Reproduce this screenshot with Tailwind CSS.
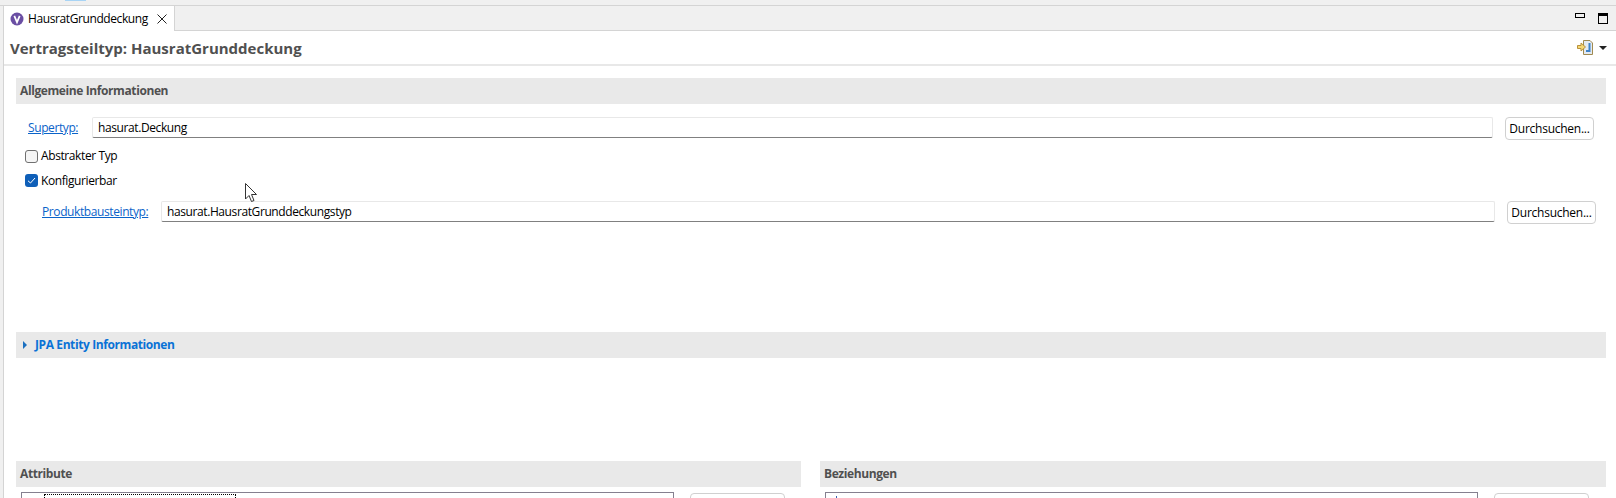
<!DOCTYPE html>
<html lang="de">
<head>
  <meta charset="UTF-8" />
  <title>HausratGrunddeckung</title>
  <script src="https://cdn.jsdelivr.net/npm/@tailwindcss/browser@4"></script>
</head>
<body class="relative h-[498px] w-[1616px] overflow-hidden bg-[#f0f0f0] font-['Open_Sans','Noto_Sans',sans-serif] text-[12px] tracking-[-0.4px] text-black">

  <!-- top strip -->
  <div class="h-[6px] border-b border-[#d4d4d4] pl-[65px]">
    <div class="h-[1px] w-[21px] bg-[#a8d4f5]"></div>
  </div>

  <div class="ml-[3px] flex h-[492px] flex-col border-l border-[#d4d4d4]">

    <!-- tab bar -->
    <div class="flex h-[25px] shrink-0 items-stretch justify-between border-b border-[#d4d4d4]">
      <div class="-mb-px flex w-[171px] items-center border-r border-[#d4d4d4] bg-white pl-[6px]">
        <svg class="h-[14px] w-[14px] shrink-0" viewBox="0 0 14 14">
          <circle cx="7" cy="7" r="6.5" fill="#6a4ea3" />
          <path d="M4.3 3.8 L7 10.2 L9.7 3.8" fill="none" stroke="#fff" stroke-width="1.7" />
        </svg>
        <span class="ml-[4px]">HausratGrunddeckung</span>
        <svg class="ml-[9px] h-[10px] w-[10px]" viewBox="0 0 10 10">
          <path d="M.5 .5 L9.5 9.5 M9.5 .5 L.5 9.5" stroke="#222" stroke-width="1" />
        </svg>
      </div>
      <div class="flex items-start gap-[13px] pr-[8px] pt-[7px]">
        <div class="h-[5px] w-[10px] border border-black"></div>
        <div class="h-[11px] w-[10px] border border-t-[3px] border-black"></div>
      </div>
    </div>

    <!-- editor -->
    <div class="flex min-h-0 flex-1 flex-col bg-white">

      <!-- form title -->
      <div class="flex h-[35px] shrink-0 items-center justify-between border-b-2 border-[#e8e8e8] pl-[6px] pr-[9px]">
        <h1 class="pt-[1px] text-[15px] font-bold tracking-normal text-[#505050]">Vertragsteiltyp: HausratGrunddeckung</h1>
        <div class="flex items-center gap-[6px]">
          <svg class="h-[16px] w-[16px]" viewBox="0 0 16 16">
            <path d="M6.5 .5 H13 L15.5 3 V14.5 H6.5 Z" fill="#e3eaf2" stroke="#a08a50" />
            <path d="M12.5 3 V11 H9" fill="none" stroke="#3f83c9" stroke-width="2" />
            <path d="M.5 5.5 H4 V3 L8.5 7 L4 11 V8.5 H.5 Z" fill="#f5d775" stroke="#b9913a" />
          </svg>
          <div class="h-0 w-0 border-x-[4px] border-t-[4px] border-x-transparent border-t-[#222]"></div>
        </div>
      </div>

      <div class="flex flex-1 flex-col pl-[12px] pr-[10px] pt-[12px]">

        <!-- Allgemeine Informationen -->
        <div class="flex h-[26px] shrink-0 items-center bg-[#e9e9e9] pb-[1px] pl-[4px] font-bold text-[#505050]">Allgemeine Informationen</div>

        <div class="mt-[13px] flex h-[24px] shrink-0 items-start pl-[12px] pr-[12px]">
          <a href="#" class="mt-[2px] w-[64px] text-[#0a63c9] underline">Supertyp:</a>
          <div class="flex h-[21px] flex-1 items-center rounded-[2px] border border-[#e8e8e8] border-b-[#808080] pl-[5px]">hasurat.Deckung</div>
          <button class="ml-[12px] h-[23px] w-[89px] rounded-[4px] border border-[#d0d0d0] bg-white tracking-[-0.25px]">Durchsuchen...</button>
        </div>

        <div class="mt-[7px] flex h-[16px] shrink-0 items-center pl-[9px]">
          <span class="h-[13px] w-[13px] rounded-[3px] border border-[#707070] bg-[#f5f5f5]"></span>
          <span class="ml-[3px]">Abstrakter Typ</span>
        </div>
        <div class="mt-[9px] flex h-[16px] shrink-0 items-center pl-[9px]">
          <span class="-mt-px flex h-[13px] w-[13px] items-center justify-center rounded-[3px] bg-[#0f5fb8]">
            <svg class="h-[9px] w-[9px]" viewBox="0 0 9 9"><path d="M1 4.8 L3.5 7 L8 2" fill="none" stroke="#fff" stroke-width="1" /></svg>
          </span>
          <span class="ml-[3px]">Konfigurierbar</span>
        </div>

        <div class="mt-[12px] flex h-[24px] shrink-0 items-start pl-[26px] pr-[10px]">
          <a href="#" class="mt-[2px] w-[119px] text-[#0a63c9] underline">Produktbausteintyp:</a>
          <div class="flex h-[21px] flex-1 items-center rounded-[2px] border border-[#e8e8e8] border-b-[#808080] pl-[5px] pt-[1px]">hasurat.HausratGrunddeckungstyp</div>
          <button class="ml-[12px] h-[23px] w-[89px] rounded-[4px] border border-[#d0d0d0] bg-white tracking-[-0.25px]">Durchsuchen...</button>
        </div>

        <!-- JPA -->
        <div class="mt-[107px] flex h-[26px] shrink-0 items-center bg-[#e9e9e9] pl-[7px] font-bold text-[#0a72d6]">
          <span class="h-0 w-0 border-y-[4px] border-l-[4px] border-y-transparent border-l-[#1a6fc0]"></span>
          <span class="ml-[8px]">JPA Entity Informationen</span>
        </div>

        <!-- Attribute / Beziehungen -->
        <div class="mt-[103px] grid flex-1 grid-cols-[785px_1fr] gap-[19px]">
          <section class="min-w-0">
            <div class="flex h-[26px] items-center bg-[#e9e9e9] pl-[4px] font-bold text-[#505050]">Attribute</div>
            <div class="mt-[5px] flex items-start pl-[5px] pr-[16px]">
              <div class="h-[20px] flex-1 border border-[#85808f] pl-[22px] pt-[1px]">
                <div class="h-[20px] w-[192px] border border-dotted border-black"></div>
              </div>
              <button class="ml-[16px] mt-[1px] h-[20px] w-[95px] rounded-[4px] border border-[#d0d0d0] bg-white"></button>
            </div>
          </section>
          <section class="min-w-0">
            <div class="flex h-[26px] items-center bg-[#e9e9e9] pl-[4px] font-bold text-[#505050]">Beziehungen</div>
            <div class="mt-[5px] flex items-start pl-[5px] pr-[17px]">
              <div class="h-[20px] flex-1 border border-[#85808f] pl-[10px] pt-[3px]">
                <div class="h-[6px] w-[1px] bg-[#3a5fb0]"></div>
              </div>
              <button class="ml-[16px] mt-[1px] h-[20px] w-[95px] rounded-[4px] border border-[#d0d0d0] bg-white"></button>
            </div>
          </section>
        </div>
      </div>
    </div>
  </div>

  <!-- mouse pointer -->
  <svg class="absolute left-[245px] top-[183px] h-[20px] w-[13px]" viewBox="0 0 13 20">
    <path d="M.5 .5 V16 L4 12.5 L6.5 18.5 L9 17.5 L6.5 11.5 H11.5 Z" fill="#fff" stroke="#333" stroke-width="1" />
  </svg>
</body>
</html>
